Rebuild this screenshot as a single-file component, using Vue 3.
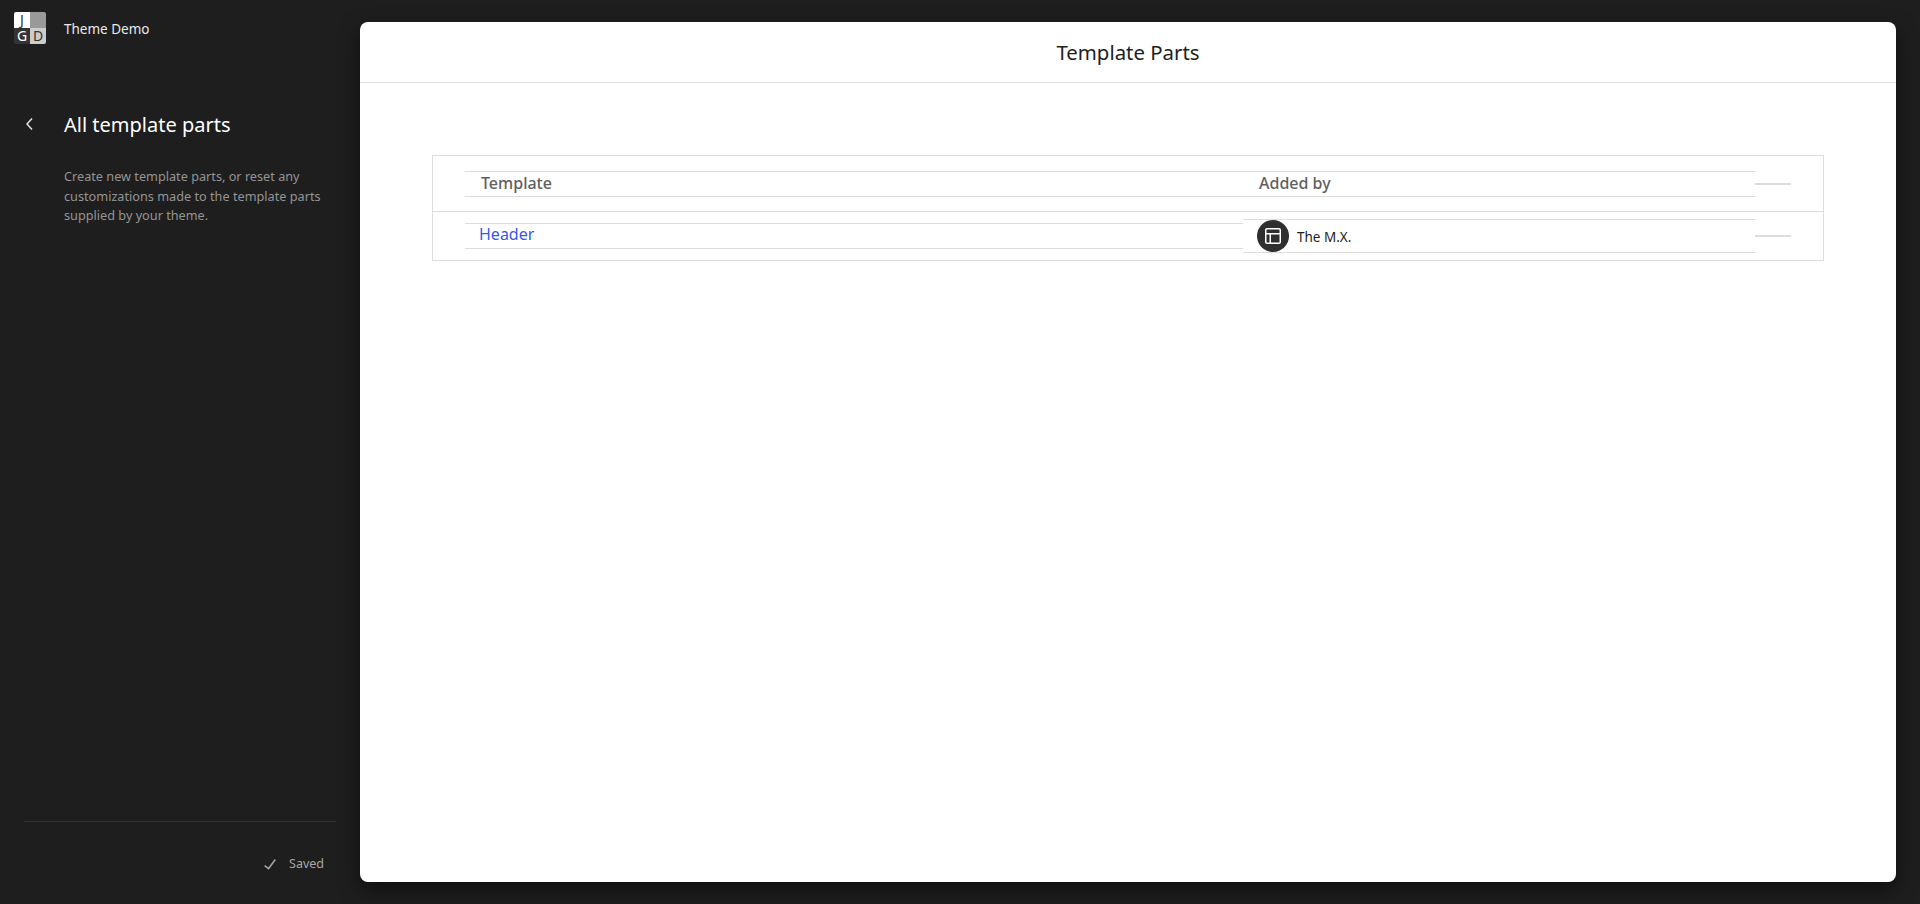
<script setup>
const columns = ['Template', 'Added by']
</script>

<template>
  <div class="layout">
    <aside class="sidebar">
      <div class="brand">
        <div class="logo" aria-label="JGD logo">
          <span class="tile j">J</span>
          <span class="tile blank"></span>
          <span class="tile g">G</span>
          <span class="tile d">D</span>
        </div>
        <span class="site">Theme Demo</span>
      </div>
      <div class="nav-head">
        <button class="back" aria-label="Back">
          <svg width="24" height="24" viewBox="0 0 24 24"><path d="M14.6 7l-1.2-1L8 12l5.400 6 1.200-1-4.600-5z" fill="#e0e0e0" /></svg>
        </button>
        <h2>All template parts</h2>
      </div>
      <p class="desc">Create new template parts, or reset any customizations made to the template parts supplied by your theme.</p>
      <div class="foot">
        <div class="saved">
          <svg width="24" height="24" viewBox="0 0 24 24"><path d="M16.7 7.100l-6.300 8.500-3.300-2.500-.9 1.200 4.500 3.400L17.900 7.900z" fill="#a6a6a6" /></svg>
          <span>Saved</span>
        </div>
      </div>
    </aside>

    <main class="frame">
      <header class="top"><h1>Template Parts</h1></header>
      <section class="content">
        <div class="table">
          <div class="row head">
            <div class="cell first"><span class="head-text">{{ columns[0] }}</span></div>
            <div class="cell second"><span class="head-text">{{ columns[1] }}</span></div>
            <div class="cell rule"></div>
          </div>
          <div class="row body">
            <div class="cell first"><a class="link" href="#">Header</a></div>
            <div class="cell second author">
              <span class="avatar">
                <svg width="24" height="24" viewBox="0 0 24 24"><path d="M18 5.500H6a.5.5 0 0 0-.5.5v3h13V6a.5.5 0 0 0-.5-.5zm.5 5H10v8h8a.5.5 0 0 0 .5-.5v-7.500zm-10 0h-3V18a.5.5 0 0 0 .5.500h2.500v-8zM6 4h12a2 2 0 0 1 2 2v12a2 2 0 0 1-2 2H6a2 2 0 0 1-2-2V6a2 2 0 0 1 2-2z" fill="#fff" /></svg>
              </span>
              <span class="name">The M.X.</span>
            </div>
            <div class="cell rule"></div>
          </div>
        </div>
      </section>
    </main>
  </div>
</template>

<style>
html, body { margin: 0; background: #1e1e1e; }
</style>

<style scoped>
.layout {
  display: flex;
  height: 904px;
  overflow: hidden;
  background: #1e1e1e;
  font-family: "Noto Sans", "Open Sans", sans-serif;
}
.sidebar {
  width: 360px;
  flex: none;
  display: flex;
  flex-direction: column;
  color: #fff;
}
.brand {
  display: flex;
  align-items: center;
  gap: 18px;
  padding: 12px 0 0 14px;
  height: 32px;
}
.logo {
  width: 32px;
  height: 32px;
  display: grid;
  grid-template-columns: 16px 16px;
  grid-auto-rows: 16px;
  font-size: 14px;
  line-height: 16px;
  text-align: center;
}
.tile.j { background: #fff; color: #333; border-top-left-radius: 2px; }
.tile.blank { background: #999; border-top-right-radius: 2px; }
.tile.g { background: #333; color: #fff; border-bottom-left-radius: 2px; }
.tile.d { background: #ccc; color: #333; border-bottom-right-radius: 2px; }
.site { font-size: 13.5px; color: #e9e9e9; padding-top: 1px; }
.nav-head {
  display: flex;
  align-items: center;
  margin-top: 63px;
  padding-left: 18px;
  height: 36px;
}
.back {
  width: 24px;
  height: 24px;
  padding: 0;
  margin: 0 22px 2px 0;
  border: 0;
  background: none;
}
.back svg { display: block; }
h2 {
  margin: 0;
  font-size: 20px;
  font-weight: 400;
  line-height: 28px;
  color: #fff;
}
.desc {
  margin: 24px 0 0 64px;
  width: 272px;
  font-size: 12.7px;
  line-height: 19.5px;
  color: #949494;
}
.foot {
  margin: auto 24px 0;
  height: 82px;
  border-top: 1px solid #2f2f2f;
  display: flex;
  justify-content: flex-end;
  align-items: center;
}
.saved {
  display: flex;
  align-items: center;
  gap: 7px;
  padding: 1px 12px 0 0;
  font-size: 12.5px;
  color: #a6a6a6;
}
.frame {
  width: 1536px;
  height: 860px;
  margin-top: 22px;
  flex: none;
  background: #fff;
  border-radius: 8px;
  box-shadow: 0 8px 20px rgba(0, 0, 0, 0.5);
  overflow: hidden;
}
.top {
  height: 60px;
  border-bottom: 1px solid #e0e0e0;
  display: flex;
  align-items: center;
  justify-content: center;
}
h1 {
  margin: 0;
  font-size: 20.4px;
  font-weight: 400;
  color: #1e1e1e;
}
.content { padding: 72px 72px 0; }
.table {
  border: 1px solid #ddd;
}
.row {
  display: flex;
  align-items: center;
  padding: 0 32px;
}
.row.head { padding-top: 15px; padding-bottom: 14px; border-bottom: 1px solid #ddd; }
.row.body { height: 48px; }
.cell { box-sizing: border-box; display: flex; align-items: center; }
.first {
  width: 778px;
  height: 26px;
  border-top: 1px solid #ddd;
  border-bottom: 1px solid #ddd;
}
.second {
  width: 512px;
  height: 26px;
  border-top: 1px solid #ddd;
  border-bottom: 1px solid #ddd;
}
.rule { width: 36px; height: 2px; background: #ddd; }
.head-text {
  font-size: 16px;
  font-weight: 500;
  line-height: 22px;
  color: #635e5e;
  padding: 0 0 2px 16px;
}
.link {
  font-size: 16px;
  line-height: 20px;
  color: #3858e9;
  text-decoration: none;
  padding: 0 0 4px 14px;
}
.author {
  height: 34px;
  padding-left: 14px;
  gap: 8px;
}
.avatar {
  width: 32px;
  height: 32px;
  border-radius: 50%;
  background: #2f2f2f;
  display: flex;
  align-items: center;
  justify-content: center;
}
.name { font-size: 13.5px; color: #1e1e1e; padding-top: 2px; }
</style>
